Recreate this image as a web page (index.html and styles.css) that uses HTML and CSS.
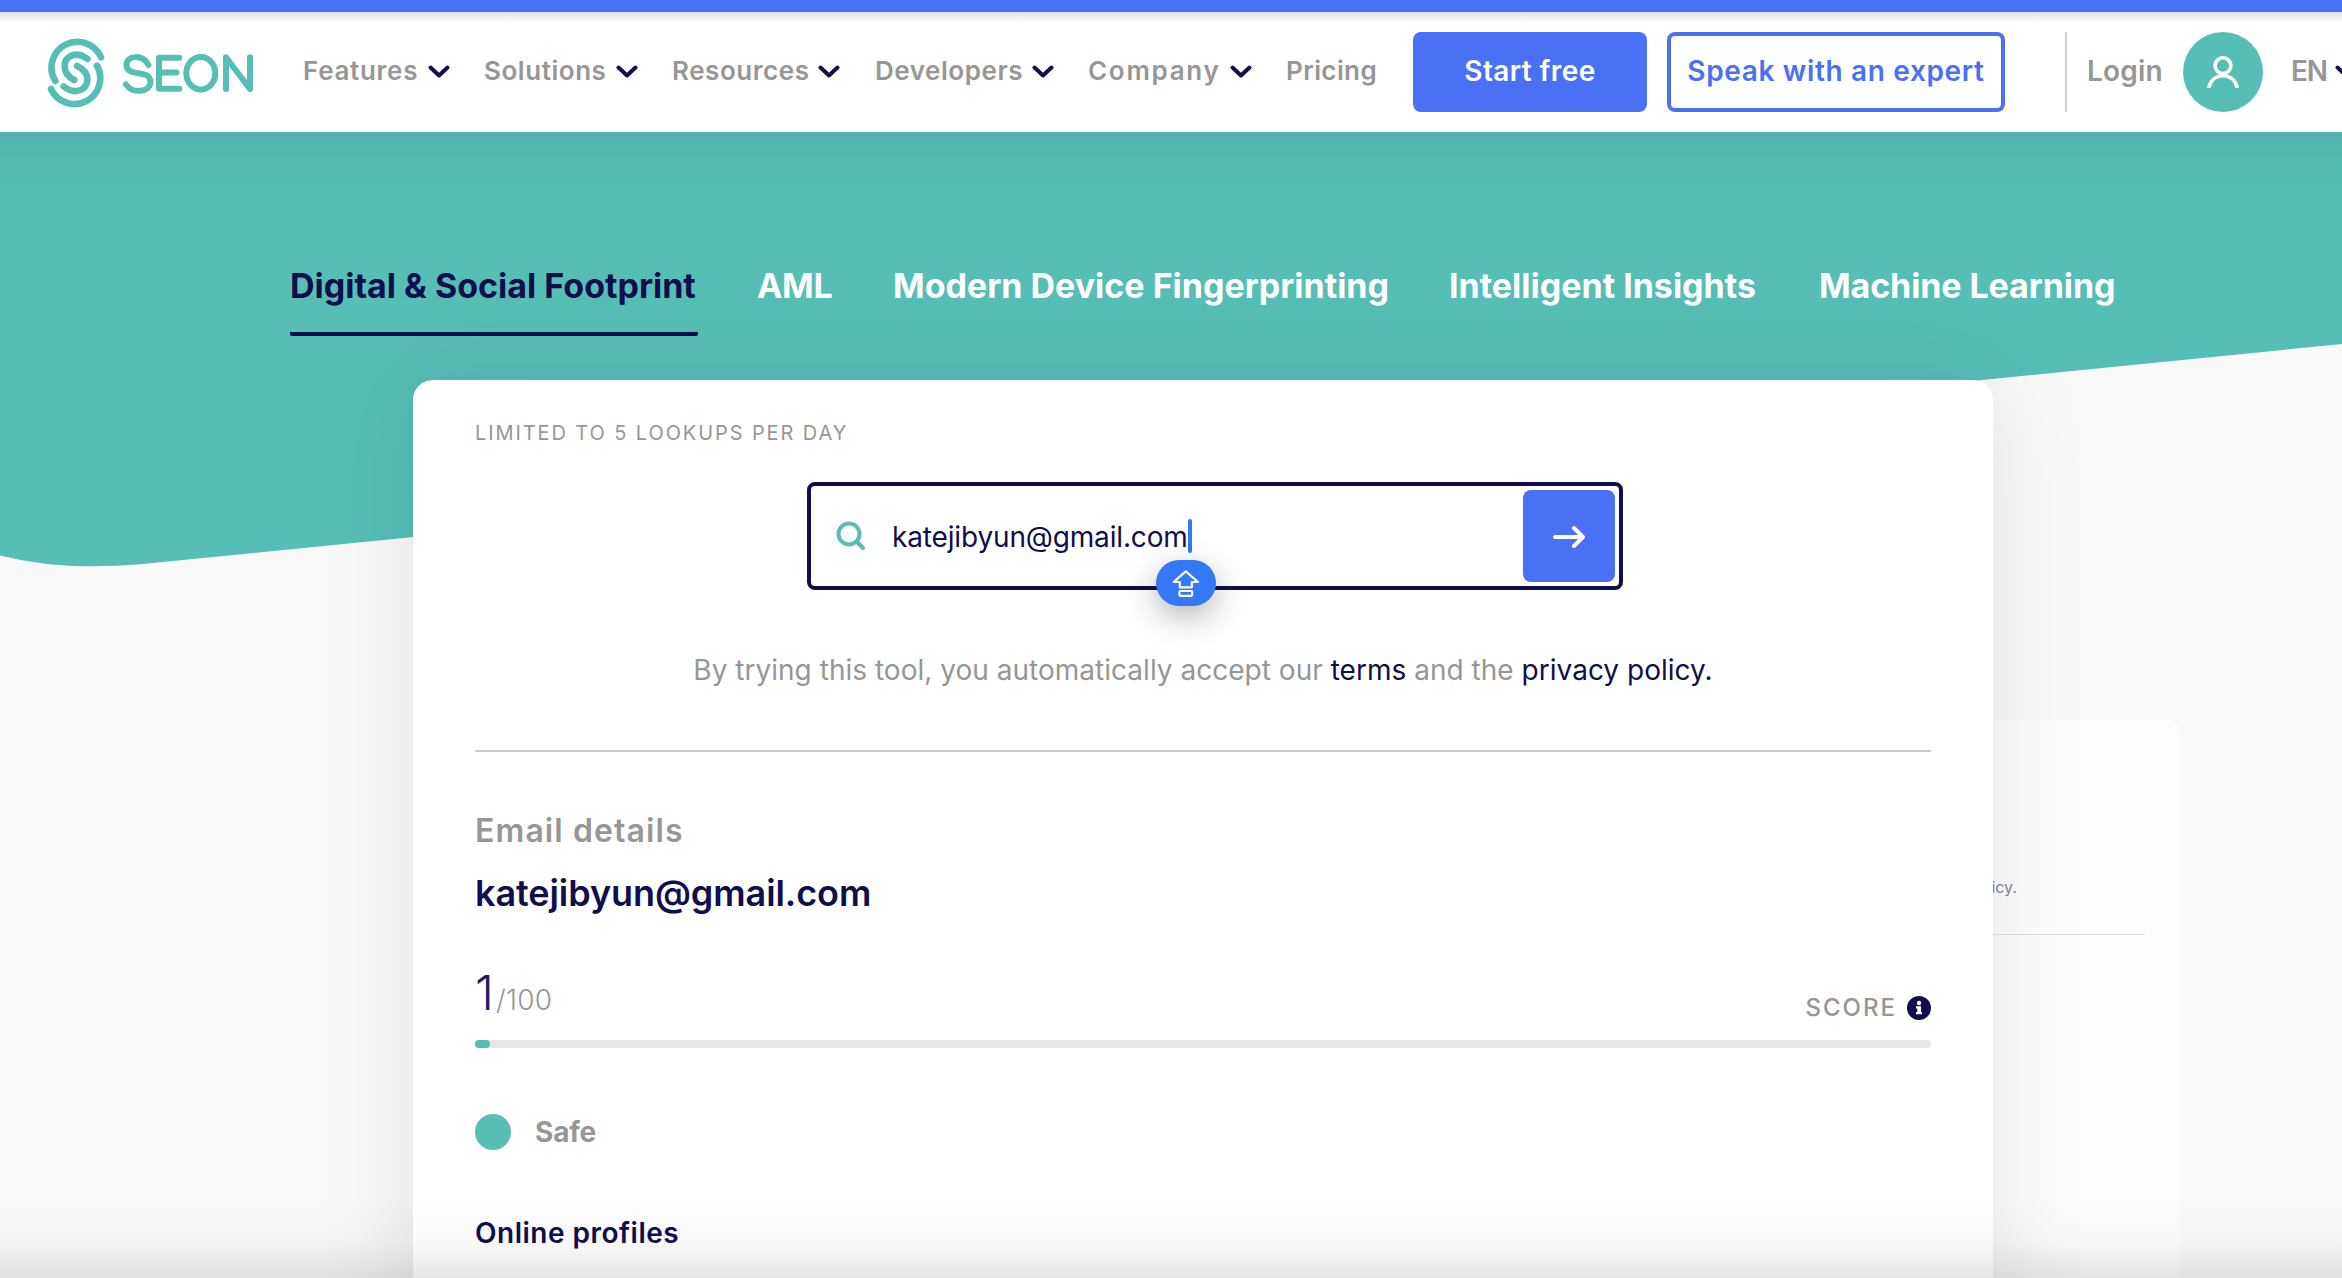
FILE: index.html
```html
<!DOCTYPE html>
<html lang="en">
<head>
<meta charset="utf-8">
<title>SEON</title>
<link rel="stylesheet" href="styles.css">
</head>
<body>
<div class="page">
  <header class="header">
    <a class="logo">
      <svg width="210" height="72" viewBox="0 0 210 72" fill="none" stroke="#57beb6" stroke-linecap="round" stroke-linejoin="round">
        <g stroke-width="6.6">
          <path d="M9.300 45A25.800 25.800 0 1 1 55 21.300"/>
          <path d="M51 29.700A25.800 25.800 0 1 1 5 53"/>
          <path d="M28.300 44C22.500 41 18.600 37 18.600 30.500C18.600 19.500 31 14.500 41.500 23"/>
          <path d="M31 30C37 32.800 41.400 36.500 41.400 43C41.400 54 29 59.500 17.800 50.500"/>
        </g>
        <g stroke-width="6">
          <path d="M102.500 29C96 17.500 80.500 19.500 80.500 29C80.500 42 104.500 32.500 104.500 46C104.500 56.500 86 58 80 48.500"/>
          <path d="M133.300 21.700H113V52.700H133.300M113 36.500H130.500"/>
          <ellipse cx="154.800" cy="37.200" rx="14.500" ry="16.300"/>
          <path d="M180 53V21.300L204 53V21.300"/>
        </g>
      </svg>
    </a>
    <nav class="nav">
      <a class="item features"><span>Features</span><svg class="chev" viewBox="0 0 22 14"><path d="M2.500 2.500L11 10.500L19.500 2.500"/></svg></a>
      <a class="item solutions"><span>Solutions</span><svg class="chev" viewBox="0 0 22 14"><path d="M2.500 2.500L11 10.500L19.500 2.500"/></svg></a>
      <a class="item resources"><span>Resources</span><svg class="chev" viewBox="0 0 22 14"><path d="M2.500 2.500L11 10.500L19.500 2.500"/></svg></a>
      <a class="item developers"><span>Developers</span><svg class="chev" viewBox="0 0 22 14"><path d="M2.500 2.500L11 10.500L19.500 2.500"/></svg></a>
      <a class="item company"><span>Company</span><svg class="chev" viewBox="0 0 22 14"><path d="M2.500 2.500L11 10.500L19.500 2.500"/></svg></a>
      <a class="item pricing"><span>Pricing</span></a>
    </nav>
    <a class="btn primary"><span>Start free</span></a>
    <a class="btn outline"><span>Speak with an expert</span></a>
    <div class="account">
      <a class="login">Login</a>
      <span class="avatar"><svg width="32" height="32" viewBox="0 0 32 32" fill="none" stroke="#fff" stroke-width="3.600"><circle cx="16" cy="9.700" r="7.900"/><path d="M1.800 32C3.200 24.500 8.500 19.700 16 19.700S28.800 24.500 30.200 32"/></svg></span>
      <a class="lang"><span>EN</span><svg class="chev" viewBox="0 0 22 14"><path d="M2.500 2.500L11 10.500L19.500 2.500"/></svg></a>
    </div>
  </header>

  <main class="hero">
    <svg class="wave" width="2342" height="440" viewBox="0 132 2342 440"><path fill="#57beb6" d="M0 132H2342V344L140 564.300Q60 571 0 555.500Z"/></svg>
    <div class="tabs">
      <a class="tab active">Digital &amp; Social Footprint</a>
      <a class="tab aml">AML</a>
      <a class="tab device">Modern Device Fingerprinting</a>
      <a class="tab insights">Intelligent Insights</a>
      <a class="tab learning">Machine Learning</a>
    </div>

    <div class="back-card"><p class="back-text">policy.</p></div>

    <section class="card">
      <p class="limit">LIMITED TO 5 LOOKUPS PER DAY</p>
      <div class="search">
        <svg class="glass" width="30" height="30" viewBox="0 0 30 30" fill="none" stroke="#57beb6" stroke-width="4" stroke-linecap="round"><circle cx="13" cy="13" r="10.500"/><path d="M21 21L27 27"/></svg>
        <span class="value">katejibyun@gmail.com</span><span class="caret"></span>
        <span class="go"><svg width="32" height="26" viewBox="0 0 32 26" fill="none" stroke="#fff" stroke-width="4" stroke-linecap="round" stroke-linejoin="round"><path d="M2 14H30M21 5L30 14L21 23"/></svg></span>
        <span class="caps"><svg width="30" height="30" viewBox="0 0 30 30" fill="none" stroke="#fff" stroke-width="2.200" stroke-linejoin="round"><path d="M14.800 3.300L27 14H20.800V19.300H8.800V14H2.600Z"/><rect x="8.400" y="23" width="12.800" height="4.800" rx="1"/></svg></span>
      </div>
      <p class="consent">By trying this tool, you automatically accept our <a>terms</a> and the <a>privacy policy.</a></p>
      <hr class="rule">
      <h2 class="details">Email details</h2>
      <p class="email">katejibyun@gmail.com</p>
      <div class="score">
        <p class="points"><span class="num">1</span><span class="max">/100</span></p>
        <p class="label">SCORE</p>
        <svg class="info" width="24" height="24" viewBox="0 0 24 24"><circle cx="12" cy="12" r="12" fill="#100e4c"/><circle cx="12" cy="7" r="2.200" fill="#fff"/><path fill="#fff" d="M9 10.300H14V16H15V18.300H9V16H10.300V12.600H9Z"/></svg>
      </div>
      <div class="bar"><div class="fill" style="width:1%"></div></div>
      <div class="status"><span class="dot"></span><span class="safe">Safe</span></div>
      <h3 class="profiles">Online profiles</h3>
    </section>
    <div class="fade"></div>
  </main>
</div>
</body>
</html>
```
FILE: styles.css
```css
* { box-sizing: border-box; }
body { margin: 0; font-family: "Inter", "Liberation Sans", sans-serif; color: #100e4c; background: #f9f9f9; }
p, h2, h3 { margin: 0; }
.page { width: 2342px; height: 1278px; overflow: hidden; display: flex; flex-direction: column; }

.header { height: 132px; flex: none; border-top: 12px solid #4970f5; background: linear-gradient(#e2e2e2, #fff 12px); display: flex; align-items: center; color: #969696; font-size: 26px; font-weight: 600; white-space: nowrap; }
.logo { flex: none; width: 257px; padding-left: 46px; height: 72px; }
.nav { display: flex; width: 1156px; padding-left: 46px; flex: none; }
.item { display: flex; align-items: center; flex: none; }
.item span { flex: none; letter-spacing: .55px; padding-bottom: 3px; }
.chev { width: 22px; height: 14px; fill: none; stroke: #100e4c; stroke-width: 4; stroke-linecap: round; stroke-linejoin: round; flex: none; }
.features { width: 181px; } .item.features span { width: 125px; letter-spacing: .7px; }
.solutions { width: 188px; } .solutions span { width: 132px; }
.resources { width: 203px; } .resources span { width: 146px; }
.developers { width: 213px; } .developers span { width: 157px; }
.company { width: 198px; } .item.company span { width: 142px; letter-spacing: 1.7px; }
.item.pricing span { letter-spacing: .4px; }
.btn { height: 80px; border-radius: 8px; display: flex; align-items: center; justify-content: center; flex: none; font-size: 28px; }
.btn span { padding-bottom: 2px; letter-spacing: .65px; }
.primary { width: 234px; background: #4970f5; color: #fff; }
.primary span { letter-spacing: .4px; }
.outline { width: 338px; margin-left: 20px; border: 4px solid #4970f5; color: #4970f5; }
.account { margin-left: 60px; border-left: 2px solid #cbcbcb; height: 80px; display: flex; align-items: center; flex: none; font-size: 28px; }
.login { width: 116px; padding: 0 0 2px 20px; letter-spacing: .2px; }
.avatar { width: 80px; height: 80px; border-radius: 50%; background: #57beb6; display: flex; align-items: center; justify-content: center; }
.lang { display: flex; align-items: center; margin-left: 28px; }
.lang span { width: 44px; padding-bottom: 2px; letter-spacing: -1.2px; }

.hero { position: relative; flex: 1; min-height: 0; display: flex; flex-direction: column; }
.hero::before { content: ""; position: absolute; z-index: 1; left: 0; right: 0; top: 0; height: 80px; background: linear-gradient(rgba(0,0,0,.06), rgba(0,0,0,.025) 45%, rgba(0,0,0,0)); }
.wave { position: absolute; left: 0; top: 0; }
.tabs { position: relative; display: flex; flex: none; gap: 60px; padding-left: 290px; height: 204px; align-items: flex-end; font-size: 34px; font-weight: 700; letter-spacing: 0; color: #fff; white-space: nowrap; }
.tab { height: 78px; line-height: 56px; flex: none; }
.tab.active { width: 408px; color: #100e4c; border-bottom: 4px solid #100e4c; border-radius: 2px; }
.aml { width: 75px; margin-left: -1px; margin-right: 1px; letter-spacing: -.3px; }
.device { width: 496px; }
.insights { width: 310px; }
.learning { letter-spacing: -.1px; }

.card { position: relative; margin: 44px 0 0 413px; width: 1580px; height: 1000px; flex: none; padding: 0 62px; background: #fff; border-radius: 20px; box-shadow: 0 0 100px rgba(0,0,0,.1); display: flex; flex-direction: column; }
.limit { margin-top: 40px; line-height: 26px; font-size: 20px; letter-spacing: 1.9px; color: #969696; }
.search { position: relative; margin: 36px 0 0 332px; width: 816px; height: 108px; border: 4px solid #100e4c; border-radius: 8px; display: flex; align-items: center; padding: 0 4px 0 25px; font-size: 28px; }
.glass { flex: none; }
.value { margin-left: 26px; padding-top: 2px; letter-spacing: -.15px; }
.caret { width: 4px; height: 34px; background: #3478f6; border-radius: 2px; }
.go { margin-left: auto; width: 92px; height: 92px; border-radius: 8px; background: #4970f5; display: flex; align-items: center; justify-content: center; }
.caps { position: absolute; left: 345px; top: 74px; width: 60px; height: 46px; border-radius: 23px; background: #3478f6; display: flex; align-items: center; justify-content: center; box-shadow: 0 10px 32px rgba(0,0,0,.3); }
.consent { margin-top: 62px; line-height: 36px; text-align: center; font-size: 28px; letter-spacing: .02px; color: #969696; white-space: nowrap; }
.consent a { color: #100e4c; }
.rule { width: 100%; height: 2px; margin: 62px 0 0; border: 0; background: #cbcbcb; flex: none; }
.details { margin-top: 59px; line-height: 40px; font-size: 32px; font-weight: 600; letter-spacing: 1.1px; color: #969696; }
.email { margin-top: 20px; line-height: 44px; font-size: 36px; font-weight: 600; letter-spacing: -.08px; }
.score { margin-top: 42px; height: 83px; display: flex; align-items: center; }
.points { line-height: 60px; margin-right: auto; font-weight: 300; }
.num { font-size: 48px; color: #1c1a6c; margin-right: 2px; }
.max { font-size: 28px; color: #969696; letter-spacing: .3px; }
.label { font-size: 24px; letter-spacing: 2px; color: #969696; font-weight: 500; padding-top: 18px; }
.info { margin: 18px 0 0 10px; }
.bar { height: 8px; flex: none; border-radius: 4px; background: #e7e7e7; }
.fill { height: 8px; border-radius: 4px; background: #57beb6; }
.status { margin-top: 66px; display: flex; align-items: center; height: 36px; }
.dot { width: 36px; height: 36px; border-radius: 50%; background: #57beb6; }
.safe { margin-left: 24px; font-size: 28px; font-weight: 700; letter-spacing: -.2px; color: #969696; }
.profiles { margin-top: 65px; line-height: 36px; font-size: 28px; font-weight: 600; letter-spacing: .5px; }

.back-card { position: absolute; left: 1800px; top: 588px; width: 380px; height: 600px; background: #fdfdfd; border-radius: 14px; padding: 157px 35px 0 0; }
.back-text { width: 217px; text-align: right; font-size: 16px; line-height: 20px; color: #8884a8; }
.back-card::after { content: ""; display: block; height: 1px; margin-top: 37px; background: #e0e0e0; }
.fade { position: absolute; left: 0; right: 0; bottom: 0; height: 80px; background: linear-gradient(rgba(0,0,0,0), rgba(0,0,0,.025) 55%, rgba(0,0,0,.1)); }
```
